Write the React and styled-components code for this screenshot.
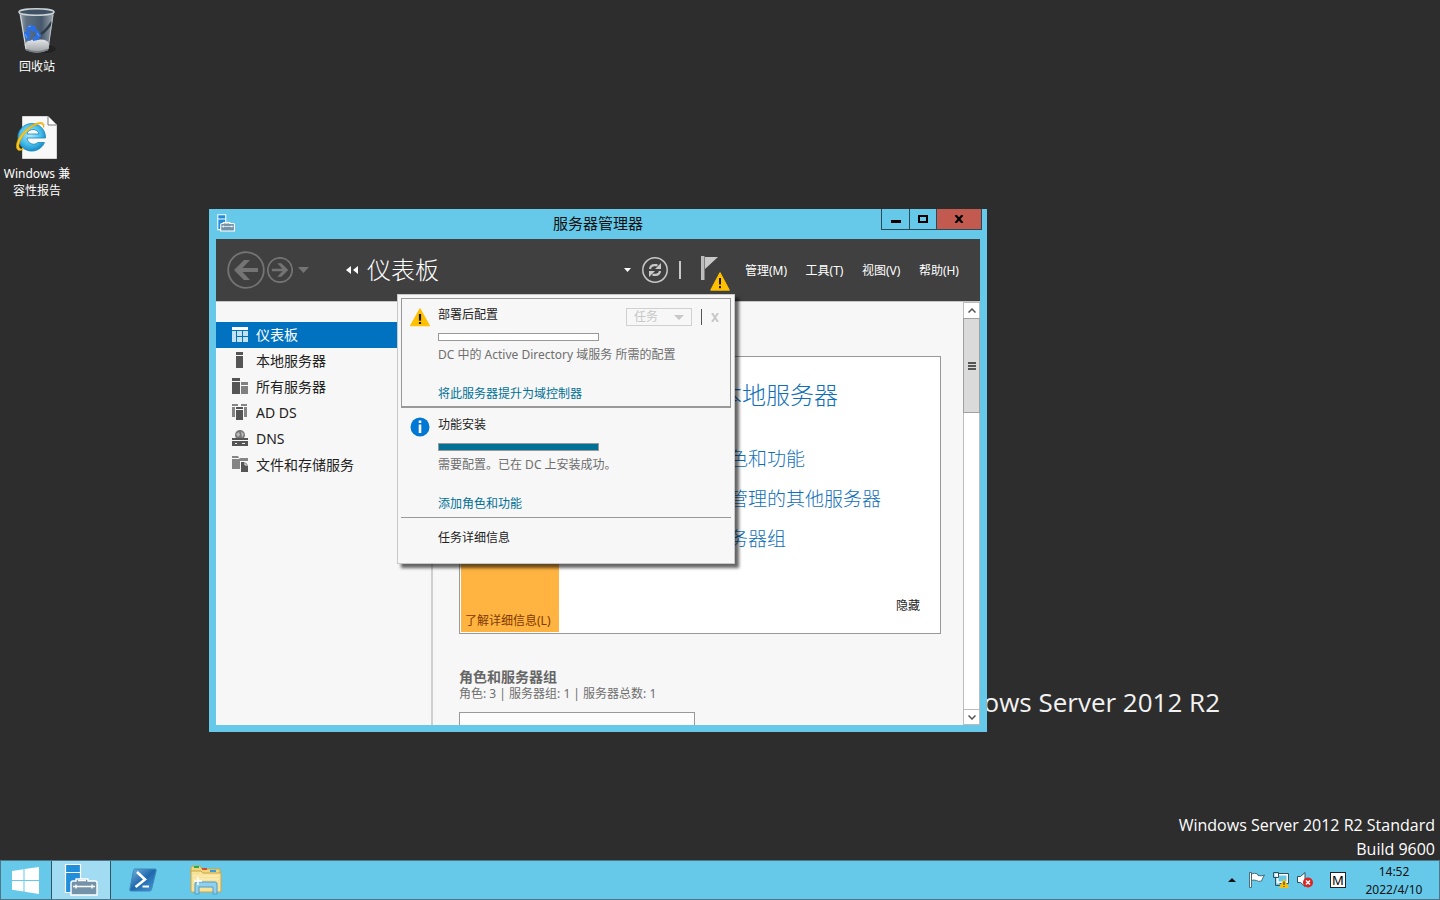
import React from 'react';
import styled, { createGlobalStyle } from 'styled-components';

const Global = createGlobalStyle`
  * { box-sizing: border-box; }
  body {
    margin: 0;
    background: #2d2d2d;
    font-family: "Noto Sans", "Noto Sans CJK SC", sans-serif;
    font-size: 12px;
    color: #222;
  }
  button {
    font: inherit;
    color: inherit;
    background: none;
    border: 0;
    padding: 0;
    margin: 0;
  }
  svg { display: block; flex: none; }
  h1, h2, p { margin: 0; padding: 0; font-weight: 400; }
`;

const Desktop = styled.div`
  display: flex;
  flex-direction: column;
  min-height: 100vh;
  overflow: hidden;
`;

const Workspace = styled.main`
  position: relative;
  flex: 1;
  min-height: 740px;
`;

const Shortcuts = styled.div`
  display: flex;
  flex-direction: column;
  width: 74px;
  gap: 39px;
  padding-top: 7px;
`;

const Shortcut = styled.button`
  display: flex;
  flex-direction: column;
  align-items: center;
  gap: 3px;
  color: #fff;
  line-height: 17px;
`;

const Wordmark = styled.p`
  position: absolute;
  right: 220px;
  bottom: 138px;
  font-family: "Open Sans", sans-serif;
  font-size: 26px;
  line-height: 40px;
  color: #f2f2f2;
  white-space: nowrap;
`;

const BuildLabel = styled.p`
  position: absolute;
  right: 5px;
  bottom: -1px;
  text-align: right;
  font-family: "Open Sans", sans-serif;
  font-size: 16px;
  line-height: 24px;
  color: #fff;
`;

/* ---------- window ---------- */

const Window = styled.section`
  position: absolute;
  left: 209px;
  top: 209px;
  width: 778px;
  height: 523px;
  display: flex;
  flex-direction: column;
  padding: 0 7px 7px;
  background: #66c9ea;
`;

const TitleBar = styled.header`
  display: grid;
  grid-template-columns: 1fr auto 1fr;
  height: 30px;
  align-items: center;
  flex: none;
  padding-bottom: 2px;
`;

const AppIcon = styled.span`
  padding-left: 1px;
`;

const WindowTitle = styled.h1`
  font-size: 15px;
  line-height: 20px;
  color: #111;
`;

const Controls = styled.div`
  display: flex;
  justify-self: end;
  align-self: start;
  margin-right: -2px;
  border: 1px solid #2c4a55;
  border-top: 0;
`;

const Control = styled.button`
  display: grid;
  place-items: center;
  width: ${(p) => (p.$close ? 45 : 27)}px;
  height: 20px;
  background: ${(p) => (p.$close ? '#c35a50' : 'transparent')};
  & + & { border-left: 1px solid #2c4a55; }
`;

const Header = styled.div`
  display: flex;
  align-items: center;
  height: 62px;
  flex: none;
  padding: 0 21px 0 11px;
  background: #404040;
  color: #fff;
`;

const HistoryNav = styled.nav`
  display: flex;
  align-items: center;
  gap: 2px;
  margin-right: 36px;
`;

const HistoryMenu = styled.button`
  padding-left: 3px;
`;

const Crumb = styled.div`
  display: flex;
  align-items: center;
  gap: 8px;
  flex: 1;
`;

const PageName = styled.h2`
  font-size: 24px;
  line-height: 32px;
  font-weight: 300;
`;

const HeaderTools = styled.div`
  display: flex;
  align-items: center;
  gap: 11px;
  margin-right: 20px;
`;

const FlagButton = styled.button`
  padding-top: 8px;
  margin-right: 14px;
`;

const Divider = styled.span`
  width: ${(p) => (p.$light ? 2 : 1)}px;
  height: ${(p) => (p.$light ? 18 : 16)}px;
  background: ${(p) => (p.$light ? '#c8c8c8' : '#555')};
`;

const MenuBar = styled.nav`
  display: flex;
  justify-content: space-between;
  width: 214px;
  padding-top: 2px;
  line-height: 18px;
  white-space: nowrap;
`;

const Body = styled.div`
  display: flex;
  flex: 1;
  min-height: 0;
  background: #f7f7f7;
  border-top: 1px solid #c6c6c6;
`;

const Sidebar = styled.nav`
  width: 217px;
  flex: none;
  padding-top: 20px;
  border-right: 2px solid #cfcfcf;
`;

const NavItem = styled.button`
  display: flex;
  align-items: center;
  gap: 8px;
  width: 100%;
  height: 26px;
  padding: 0 0 2px 16px;
  font-size: 14px;
  color: ${(p) => (p.$active ? '#fff' : '#222')};
  background: ${(p) => (p.$active ? '#0072c0' : 'transparent')};
`;

const Content = styled.div`
  flex: 1;
  min-width: 0;
  overflow: hidden;
  padding: 54px 22px 0 26px;
`;

const WelcomeCard = styled.section`
  display: flex;
  height: 278px;
  padding: 1px;
  background: #fff;
  border: 1px solid #999;
`;

const LearnTile = styled.button`
  display: flex;
  align-items: flex-end;
  width: 98px;
  margin-right: 159px;
  padding: 0 0 2px 4px;
  line-height: 18px;
  white-space: nowrap;
  color: #7d3a00;
  background: #ffb340;
`;

const Steps = styled.div`
  display: flex;
  flex-direction: column;
  align-items: flex-start;
  flex: 1;
  padding: 17px 19px 17px 0;
  white-space: nowrap;
`;

const StepLink = styled.a`
  color: #0f6fb8;
  text-decoration: none;
  font-weight: 300;
  font-size: ${(p) => (p.$large ? 24 : 19)}px;
  line-height: 40px;
  margin-bottom: ${(p) => (p.$large ? 24 : 0)}px;
  margin-left: ${(p) => (p.$large ? 0 : 11)}px;
`;

const HideButton = styled.button`
  align-self: flex-end;
  margin-top: auto;
  line-height: 18px;
`;

const GroupTitle = styled.h2`
  margin-top: 34px;
  font-size: 14px;
  line-height: 18px;
  font-weight: 700;
  color: #666;
`;

const GroupSummary = styled.p`
  line-height: 16px;
  color: #6e6e6e;
`;

const GroupTile = styled.div`
  width: 236px;
  height: 60px;
  margin-top: 10px;
  background: #fcfcfc;
  border: 1px solid #999;
`;

const ScrollBar = styled.div`
  display: flex;
  flex-direction: column;
  width: 17px;
  flex: none;
  background: #fff;
  border: 1px solid #bcbcbc;
`;

const ScrollButton = styled.button`
  display: grid;
  place-items: center;
  height: 15px;
  border-top: ${(p) => (p.$end ? '1px solid #bcbcbc' : 0)};
  margin-top: ${(p) => (p.$end ? 'auto' : 0)};
`;

const ScrollThumb = styled.div`
  display: grid;
  place-items: center;
  height: 95px;
  margin: 0 -1px;
  background: #dadada;
  border: 1px solid #a0a0a0;
`;

/* ---------- notification flyout ---------- */

const Flyout = styled.aside`
  position: absolute;
  left: 188px;
  top: 85px;
  width: 338px;
  height: 270px;
  padding: 3px;
  background: #f7f7f7;
  border: 1px solid #c8c8c8;
  box-shadow: 4px 4px 3px rgba(0, 0, 0, 0.6);
`;

const Task = styled.article`
  display: flex;
  gap: 8px;
  height: 110px;
  padding: ${(p) => (p.$boxed ? '7px 9px 0 8px' : '8px 10px 0 9px')};
  border: ${(p) => (p.$boxed ? '1px solid #999' : 0)};
  border-bottom: ${(p) => (p.$boxed ? 2 : 1)}px solid #999;
`;

const TaskIcon = styled.div`
  padding-top: ${(p) => p.$drop}px;
`;

const TaskText = styled.div`
  display: flex;
  flex-direction: column;
  align-items: flex-start;
  line-height: 18px;
`;

const Progress = styled.div`
  width: 161px;
  height: 8px;
  margin: 9px 0 5px;
  border: 1px solid #999;
  background: ${(p) => (p.$done ? '#007096' : '#fff')};
`;

const TaskDetail = styled.p`
  color: #6e6e6e;
  white-space: nowrap;
`;

const TaskLink = styled.a`
  margin-top: 21px;
  color: #007096;
  text-decoration: none;
`;

const TaskTop = styled.div`
  display: flex;
  align-items: center;
  justify-content: space-between;
  width: 281px;
  height: 18px;
`;

const TaskActions = styled.div`
  display: flex;
  align-items: center;
  gap: 9px;
  padding-top: 4px;
`;

const TaskMenu = styled.button`
  display: flex;
  align-items: center;
  justify-content: space-between;
  width: 66px;
  height: 18px;
  padding: 0 7px;
  border: 1px solid #d0d0d0;
  color: #c8c8c8;
`;

const DetailsLink = styled.button`
  display: block;
  margin: 11px 0 0 37px;
  line-height: 18px;
`;

/* ---------- taskbar ---------- */

const TaskBar = styled.footer`
  display: flex;
  height: 40px;
  flex: none;
  background: #66c9ea;
  border: 1px solid #4b7788;
`;

const TaskButton = styled.button`
  display: grid;
  place-items: center;
  width: ${(p) => p.$width || 62}px;
  background: ${(p) => (p.$active ? '#a1dcf2' : 'transparent')};
  border: ${(p) => (p.$active ? '1px solid #2f5563' : 0)};
  border-width: 0 1px;
`;

const Tray = styled.div`
  display: flex;
  align-items: center;
  margin-left: auto;
  gap: 8px;
`;

const TrayToggle = styled.button`
  margin-right: 5px;
`;

const Ime = styled.button`
  width: 16px;
  height: 16px;
  margin: 0 3px 0 9px;
  background: #fff;
  border: 1px solid #222;
  color: #000;
  font-size: 13px;
  line-height: 14px;
`;

const Clock = styled.time`
  width: 74px;
  margin-right: 8px;
  padding-top: 2px;
  text-align: center;
  line-height: 18px;
  color: #111;
`;

/* ---------- icons ---------- */

const RecycleBin = () => (
  <svg width="44" height="48" viewBox="0 0 44 48" aria-hidden="true">
    <defs>
      <linearGradient id="bin" x1="0" x2="1" y1="0" y2="0">
        <stop offset="0" stopColor="#a9b1b8" /><stop offset=".2" stopColor="#5f7180" />
        <stop offset=".65" stopColor="#46596c" /><stop offset="1" stopColor="#a4abb0" />
      </linearGradient>
      <linearGradient id="binBase" x1="0" x2="0" y1="0" y2="1">
        <stop offset="0" stopColor="#e3e5e6" /><stop offset="1" stopColor="#9a9fa3" />
      </linearGradient>
    </defs>
    <ellipse cx="31" cy="42" rx="10" ry="4" fill="#222" />
    <path d="M4 4 L10.500 43 Q22 49 33 43 L39 4Z" fill="url(#bin)" />
    <path d="M37 15 Q31 24 26 27" fill="none" stroke="#2e3c49" strokeWidth="2.500" />
    <path d="M9.500 38 Q12 32 21 33 Q32 31 34.500 37 L33 43 Q22 48 11 43Z" fill="url(#binBase)" />
    <path d="M11 42.500 Q22 47 33 42.500" fill="none" stroke="#777d82" strokeWidth="1.500" />
    <path d="M12 20l4-2 4 1 2 5-4 1-2-2-2 2-3-2zM9 25l5-1 2 4-2 2 2 4-4-1-3-4zM20 25l3-2 3 6-3 4-5 1v-4l3-1z" fill="#2c6fe0" />
    <path d="M13 20l3-1M10 27l2 4M22 26l2 3" stroke="#6ba1f2" strokeWidth="1" />
    <ellipse cx="21.500" cy="5" rx="17.500" ry="3.300" fill="#3f5263" stroke="#cdd2d5" strokeWidth="1.500" />
    <path d="M5.500 8 11 42" stroke="#d8dde0" strokeWidth="1" />
    <path d="M38 8 33 42" stroke="#b9c0c5" strokeWidth="1" />
  </svg>
);

const IePage = () => (
  <svg width="44" height="48" viewBox="0 0 44 48" aria-hidden="true">
    <defs>
      <radialGradient id="ie" cx=".45" cy=".4" r=".6">
        <stop offset="0" stopColor="#b5ecfb" /><stop offset=".6" stopColor="#4bbfeb" /><stop offset="1" stopColor="#168bc8" />
      </radialGradient>
    </defs>
    <path d="M7.500 2.500H33l8.500 8.500V44.500h-34z" fill="#f8f8f8" stroke="#d5d5d5" />
    <path d="M33 2.500v8.500h8.500" fill="#fff" stroke="#777" />
    <path d="M29.500 28.500A13.800 13.800 0 1 1 30.500 24H12C12.500 30 20 32 22.500 28.500H29.500M12 20h12c-1-6-11-6-12 0z" fill="url(#ie)" stroke="#1784bd" strokeWidth=".8" fillRule="evenodd" />
    <path d="M28.500 13.500C31 7 23 7 14.500 13 6 19 1 27 1.500 33 2 37.500 6 37 9 34.500 5 36 3.500 34 4 30.500 5 25 10 18 17 13 23 9 29 8 28.500 13.500Z" fill="#fbc91f" stroke="#e5a600" strokeWidth=".7" />
  </svg>
);

const ServerToolbox = ({ size }) => (
  <svg width={size} height={size} viewBox="0 0 34 34" aria-hidden="true">
    <path d="M1.500 1.500h15v8h-15zM1.500 9.500h15v20h-15z" fill="#218edb" stroke="#fff" strokeWidth={size < 20 ? 2 : 1.200} />
    <path d="M12 18v-2h12v2h7q2 0 2 2v12H7V20q0-2 2-2z" fill="#7593a8" stroke="#fff" strokeWidth={size < 20 ? 2 : 1.400} />
    <path d="M14 17.500h8M9 23.500h22M12 21.500v4M28 21.500v4" stroke="#fff" strokeWidth="1.400" />
  </svg>
);

const Warning = ({ size = 18 }) => (
  <svg width={size} height={size} viewBox="0 0 18 18" aria-hidden="true">
    <path d="M9 .8 17.500 16H.5Z" fill="#ffc000" stroke="#ffc000" strokeWidth="1" strokeLinejoin="round" />
    <path d="M8 5.500h2v6H8zM8 12.500h2v2H8z" fill="#1c1c1c" />
  </svg>
);

const Info = () => (
  <svg width="20" height="20" viewBox="0 0 20 20" aria-hidden="true">
    <circle cx="10" cy="10" r="9.500" fill="#0078d4" />
    <path d="M8.700 3.500h2.600v2.500H8.700zM8.700 7.500h2.600v8.500H8.700z" fill="#fff" />
  </svg>
);

const Arrow = ({ size, back }) => (
  <svg width={size} height={size} viewBox="0 0 38 38" aria-hidden="true">
    <circle cx="19" cy="19" r="17.800" fill="none" stroke="#747474" strokeWidth={back ? 1.800 : 2.600} />
    <path
      d="M7 19 17 9h6l-7.500 8H31v4H15.500l7.500 8h-6z"
      fill="#747474"
      transform={back ? undefined : 'matrix(-1 0 0 1 38 0)'}
    />
  </svg>
);

const Caret = ({ width = 7, height, color = '#fff', up }) => (
  <svg width={width} height={height || Math.ceil(width / 2)} viewBox="0 0 10 5" preserveAspectRatio="none" aria-hidden="true">
    <path d={up ? 'M0 5h10L5 0z' : 'M0 0h10L5 5z'} fill={color} />
  </svg>
);

const Refresh = () => (
  <svg width="26" height="26" viewBox="0 0 26 26" fill="none" stroke="#c8c8c8" aria-hidden="true">
    <circle cx="13" cy="13" r="12.200" strokeWidth="1.500" />
    <path d="M8 12Q8.500 8.200 12.500 8.200H15.500M18 14Q17.500 17.800 13.500 17.800H10.500" strokeWidth="2.200" />
    <path d="M13 12h6V6zM13 14H7v6z" fill="#c8c8c8" stroke="none" />
  </svg>
);

const NotifyFlag = () => (
  <svg width="30" height="36" viewBox="0 0 30 36" aria-hidden="true">
    <path d="M0 0h3.500v24H0z" fill="#bdbdbd" />
    <path d="M4 1h13L4 13z" fill="#c9c9c9" />
    <path d="M19 17 28 34H10z" fill="#ffc000" stroke="#ffc000" strokeWidth="1.500" strokeLinejoin="round" />
    <path d="M18 22h2v6.500h-2zM18 30h2v2.200h-2z" fill="#1c1c1c" />
  </svg>
);

const NAV_ICONS = {
  dashboard: (
    <g>
      <path d="M0 1h16v3H0z" fill="#fff" />
      <path d="M0 5h4v11H0zM5 5h5v5H5zM11 5h5v5h-5zM5 11h5v5H5zM11 11h5v5h-5z" fill="#c5e2f3" />
    </g>
  ),
  local: <path d="M4 0h7v3H4zM4 4h7v12H4z" fill="#555" />,
  all: (
    <g>
      <path d="M0 0h8v3H0zM0 4h8v12H0z" fill="#555" />
      <path d="M9 4h7v3H9zM9 8h7v8H9z" fill="#808080" />
    </g>
  ),
  adds: (
    <g>
      <path d="M0 0h6v2H0zM0 3h3v10H0zM9 0h6v2H9zM12 3h3v10h-3z" fill="#858585" />
      <path d="M4 3h7v2H4zM4 6h7v10H4z" fill="#555" />
    </g>
  ),
  dns: (
    <g>
      <circle cx="8" cy="5" r="5" fill="#777" />
      <path d="M4 4l3-2 1 3-2 2zM9 1l3 3-2 4" fill="#bbb" />
      <path d="M0 8h16v2H0zM0 11h16v5H0z" fill="#555" />
      <path d="M3 13h2v1H3zM10 13h3v1h-3z" fill="#eee" />
    </g>
  ),
  storage: (
    <g>
      <path d="M0 0h6l1 2H0zM0 3h7l1-1h8v3H8v8H0z" fill="#858585" />
      <path d="M9 6h4l3 3v7H9z" fill="#555" />
      <path d="M13 6v3h3" fill="none" stroke="#f7f7f7" />
    </g>
  ),
};

const NavIcon = ({ name }) => (
  <svg width="16" height="16" viewBox="0 0 16 16" aria-hidden="true">{NAV_ICONS[name]}</svg>
);

const WindowsLogo = () => (
  <svg width="28" height="27" viewBox="0 0 28 27" fill="#fff" aria-hidden="true">
    <path d="M0 4 11.500 2.200V13H0zM12.500 2 27 0v13H12.500zM0 14h11.500v10.500L0 22.800zM12.500 14H27v13l-14.500-2.300z" />
  </svg>
);

const PowerShell = () => (
  <svg width="28" height="24" viewBox="0 0 28 24" aria-hidden="true">
    <defs>
      <linearGradient id="ps" x1="0" x2="1" y1="0" y2="1">
        <stop offset="0" stopColor="#78b7df" /><stop offset=".5" stopColor="#2068ad" /><stop offset="1" stopColor="#4a9cd8" />
      </linearGradient>
    </defs>
    <path d="M6 1h20q1.500 0 1.200 1.500L22.500 21.500Q22 23 20.500 23H2Q.5 23 .8 21.500L4.500 2.500Q4.800 1 6 1z" fill="url(#ps)" stroke="#3d86b8" />
    <path d="M8 4l8 7.500L6.500 19" fill="none" stroke="#fff" strokeWidth="2.600" />
    <path d="M13.500 18.500h6.500" stroke="#fff" strokeWidth="2" />
  </svg>
);

const Explorer = () => (
  <svg width="32" height="30" viewBox="0 0 32 30" aria-hidden="true">
    <path d="M1 3q0-2 2-2h7l2 3h18v5H1z" fill="#f0d77e" stroke="#c9a748" />
    <path d="M4 1h5v2H4z" fill="#21b04b" />
    <path d="M12 3h5v2h-5z" fill="#d9492f" /><path d="M20 5h6v2h-6z" fill="#3b9be0" />
    <path d="M1 6h10l2 2h18v18q0 1-1 1H2q-1 0-1-1z" fill="#f6e29a" stroke="#c9a748" />
    <path d="M3 11h26M3 14h26" stroke="#fff1bd" />
    <path d="M5 29V19q0-2 2-2h18q2 0 2 2v10h-4v-7H9v7z" fill="#8fd0ee" stroke="#4c9cc6" />
    <path d="M8 12v8M4 16h8" stroke="#fff" strokeWidth="1.500" />
  </svg>
);

const TrayFlag = () => (
  <svg width="16" height="16" viewBox="0 0 16 16" aria-hidden="true">
    <path d="M.5.5h2v15h-2z" fill="#fff" stroke="#35505c" strokeWidth=".8" />
    <path d="M2.500 2q3-1.500 6 0l.5 1.500q3 1 6.500-.5-2 3-3 6-3 1-5-.5-3-1-5 0z" fill="#fff" stroke="#35505c" strokeWidth=".8" />
  </svg>
);

const TrayNetwork = () => (
  <svg width="16" height="16" viewBox="0 0 16 16" aria-hidden="true">
    <path d="M4.500 2.500h10v8h-10z" fill="#66c9ea" stroke="#fff" strokeWidth="2" />
    <path d="M5.500 1.500h10v10h-9M.5.500h5v5h-5zM2.500 6v7.500h5" fill="none" stroke="#35505c" />
    <path d="M1.500 1.500h3v3h-3z" fill="#fff" />
    <path d="M11 6.500 16 16H6z" fill="#ffc000" /><path d="M10.500 9.500h1v3.500h-1zM10.500 14h1v1h-1z" fill="#222" />
  </svg>
);

const TraySound = () => (
  <svg width="16" height="16" viewBox="0 0 16 16" aria-hidden="true">
    <path d="M.5 4.500h3l4.500-4v14l-4.500-4h-3z" fill="#fff" stroke="#35505c" />
    <circle cx="11" cy="10.500" r="5" fill="#dc2424" />
    <path d="M9 8.500l4 4M13 8.500l-4 4" stroke="#fff" strokeWidth="1.500" />
  </svg>
);

const NAV = [
  ['dashboard', '仪表板'],
  ['local', '本地服务器'],
  ['all', '所有服务器'],
  ['adds', 'AD DS'],
  ['dns', 'DNS'],
  ['storage', '文件和存储服务'],
];

const MENUS = ['管理(M)', '工具(T)', '视图(V)', '帮助(H)'];

function TitleControls() {
  return (
    <Controls>
      <Control aria-label="最小化">
        <svg width="10" height="12"><path d="M0 7h10v3H0z" /></svg>
      </Control>
      <Control aria-label="最大化">
        <svg width="10" height="8"><path d="M1 1h8v6H1z" fill="none" stroke="#000" strokeWidth="2" /></svg>
      </Control>
      <Control $close aria-label="关闭">
        <svg width="10" height="8"><path d="M1.500 0l7 8M8.500 0l-7 8" stroke="#000" strokeWidth="2.200" /></svg>
      </Control>
    </Controls>
  );
}

function DismissTask() {
  return (
    <button disabled aria-label="移除任务">
      <svg width="8" height="9"><path d="M1 0l6 9M7 0L1 9" stroke="#c8c8c8" strokeWidth="2" /></svg>
    </button>
  );
}

function Notifications() {
  return (
    <Flyout aria-label="通知">
      <Task $boxed>
        <TaskIcon $drop={2}><Warning size={20} /></TaskIcon>
        <TaskText>
          <TaskTop>
            <span>部署后配置</span>
            <TaskActions>
              <TaskMenu disabled>任务<Caret width={10} color="#c8c8c8" /></TaskMenu>
              <Divider />
              <DismissTask />
            </TaskActions>
          </TaskTop>
          <Progress />
          <TaskDetail>DC 中的 Active Directory 域服务 所需的配置</TaskDetail>
          <TaskLink href="#promote">将此服务器提升为域控制器</TaskLink>
        </TaskText>
      </Task>
      <Task>
        <TaskIcon $drop={1}><Info /></TaskIcon>
        <TaskText>
          <span>功能安装</span>
          <Progress $done />
          <TaskDetail>需要配置。已在 DC 上安装成功。</TaskDetail>
          <TaskLink href="#roles">添加角色和功能</TaskLink>
        </TaskText>
      </Task>
      <DetailsLink>任务详细信息</DetailsLink>
    </Flyout>
  );
}

function ServerManager() {
  return (
    <Window>
      <TitleBar>
        <AppIcon><ServerToolbox size={18} /></AppIcon>
        <WindowTitle>服务器管理器</WindowTitle>
        <TitleControls />
      </TitleBar>
      <Header>
        <HistoryNav>
          <button aria-label="后退"><Arrow size={38} back /></button>
          <button aria-label="前进"><Arrow size={26} /></button>
          <HistoryMenu aria-label="历史记录"><Caret width={11} color="#747474" /></HistoryMenu>
        </HistoryNav>
        <Crumb>
          <svg width="14" height="8" fill="#fff" aria-hidden="true"><path d="M6 0v8L1 4zM13 0v8L8 4z" /></svg>
          <PageName>仪表板</PageName>
        </Crumb>
        <HeaderTools>
          <button aria-label="位置"><Caret /></button>
          <button aria-label="刷新"><Refresh /></button>
          <Divider $light />
        </HeaderTools>
        <FlagButton aria-label="通知"><NotifyFlag /></FlagButton>
        <MenuBar>
          {MENUS.map((m) => <button key={m}>{m}</button>)}
        </MenuBar>
      </Header>
      <Body>
        <Sidebar>
          {NAV.map(([icon, label], i) => (
            <NavItem key={icon} $active={i === 0}><NavIcon name={icon} />{label}</NavItem>
          ))}
        </Sidebar>
        <Content>
          <WelcomeCard>
            <LearnTile>了解详细信息(L)</LearnTile>
            <Steps>
              <StepLink href="#local" $large>本地服务器</StepLink>
              <StepLink href="#features">色和功能</StepLink>
              <StepLink href="#servers">管理的其他服务器</StepLink>
              <StepLink href="#group">务器组</StepLink>
              <HideButton>隐藏</HideButton>
            </Steps>
          </WelcomeCard>
          <GroupTitle>角色和服务器组</GroupTitle>
          <GroupSummary>角色: 3 | 服务器组: 1 | 服务器总数: 1</GroupSummary>
          <GroupTile />
        </Content>
        <ScrollBar>
          <ScrollButton aria-label="向上滚动">
            <svg width="8" height="5"><path d="M.5 4.500 4 1l3.500 3.500" fill="none" stroke="#555" strokeWidth="1.500" /></svg>
          </ScrollButton>
          <ScrollThumb>
            <svg width="8" height="8"><path d="M0 1h8M0 4h8M0 7h8" stroke="#555" strokeWidth="2" /></svg>
          </ScrollThumb>
          <ScrollButton $end aria-label="向下滚动">
            <svg width="8" height="5"><path d="M.5.5 4 4 7.500.5" fill="none" stroke="#555" strokeWidth="1.500" /></svg>
          </ScrollButton>
        </ScrollBar>
      </Body>
      <Notifications />
    </Window>
  );
}

export default function App() {
  return (
    <Desktop>
      <Global />
      <Workspace>
        <Shortcuts>
          <Shortcut><RecycleBin />回收站</Shortcut>
          <Shortcut><IePage /><span>Windows 兼<br />容性报告</span></Shortcut>
        </Shortcuts>
        <Wordmark>ows Server 2012 R2</Wordmark>
        <BuildLabel>Windows Server 2012 R2 Standard<br />Build 9600</BuildLabel>
        <ServerManager />
      </Workspace>
      <TaskBar>
        <TaskButton $width={50} aria-label="开始"><WindowsLogo /></TaskButton>
        <TaskButton $width={60} $active aria-label="服务器管理器"><ServerToolbox size={34} /></TaskButton>
        <TaskButton $width={64} aria-label="PowerShell"><PowerShell /></TaskButton>
        <TaskButton aria-label="文件资源管理器"><Explorer /></TaskButton>
        <Tray>
          <TrayToggle aria-label="显示隐藏的图标"><Caret width={8} color="#111" up /></TrayToggle>
          <TrayFlag />
          <TrayNetwork />
          <TraySound />
          <Ime>M</Ime>
          <Clock>14:52<br />2022/4/10</Clock>
        </Tray>
      </TaskBar>
    </Desktop>
  );
}
